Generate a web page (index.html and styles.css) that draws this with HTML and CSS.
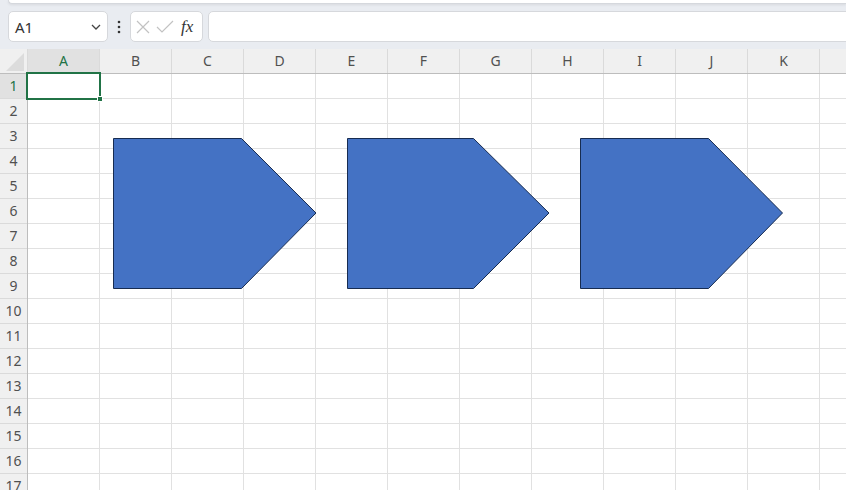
FILE: index.html
```html
<!DOCTYPE html>
<html lang="en">
<head>
  <meta charset="UTF-8" />
  <title>Book1 - Excel</title>
  <link rel="stylesheet" href="styles.css">
</head>
<body>
  <div class="app">
    <div class="ribbon-edge"></div>

    <div class="formula-bar">
      <div class="name-box">
        <span>A1</span>
        <svg class="chevron" width="10" height="6" viewBox="0 0 10 6"><path d="M1 1 L5 5 L9 1" fill="none" stroke="#444" stroke-width="1.3"/></svg>
      </div>
      <div class="more">
        <svg width="4" height="14" viewBox="0 0 4 14"><circle cx="2" cy="2" r="1.3" fill="#333"/><circle cx="2" cy="7" r="1.3" fill="#333"/><circle cx="2" cy="12" r="1.3" fill="#333"/></svg>
      </div>
      <div class="fx-box">
        <svg width="14" height="14" viewBox="0 0 14 14"><path d="M1 1 L13 13 M13 1 L1 13" stroke="#c2c2c2" stroke-width="1.2"/></svg>
        <svg width="18" height="14" viewBox="0 0 18 14"><path d="M1 7 L6 12 L17 1" fill="none" stroke="#c2c2c2" stroke-width="1.2"/></svg>
        <span class="fx">fx</span>
      </div>
      <div class="formula-input"></div>
    </div>

    <div class="sheet">
      <div class="col-headers">
        <div class="corner">
          <svg width="20" height="20" viewBox="0 0 20 20"><polygon points="20,2 20,20 2,20" fill="#dcdcdc"/></svg>
        </div>
        <div class="col-head active">A</div>
        <div class="col-head">B</div>
        <div class="col-head">C</div>
        <div class="col-head">D</div>
        <div class="col-head">E</div>
        <div class="col-head">F</div>
        <div class="col-head">G</div>
        <div class="col-head">H</div>
        <div class="col-head">I</div>
        <div class="col-head">J</div>
        <div class="col-head">K</div>
        <div class="col-head">L</div>
      </div>
      <div class="body">
        <div class="row-headers">
          <div class="row-head active">1</div>
          <div class="row-head">2</div>
          <div class="row-head">3</div>
          <div class="row-head">4</div>
          <div class="row-head">5</div>
          <div class="row-head">6</div>
          <div class="row-head">7</div>
          <div class="row-head">8</div>
          <div class="row-head">9</div>
          <div class="row-head">10</div>
          <div class="row-head">11</div>
          <div class="row-head">12</div>
          <div class="row-head">13</div>
          <div class="row-head">14</div>
          <div class="row-head">15</div>
          <div class="row-head">16</div>
          <div class="row-head">17</div>
        </div>
        <div class="cells"></div>
      </div>
    </div>

    <!-- floating shapes -->
    <svg class="shapes" width="846" height="490" viewBox="0 0 846 490">
      <polygon points="113.5,138.5 241.5,138.5 316,213 241.5,288.5 113.5,288.5" />
      <polygon points="347.5,138.5 473.5,138.5 549,213 473.5,288.5 347.5,288.5" />
      <polygon points="580.5,138.5 708.5,138.5 782.5,213 708.5,288.5 580.5,288.5" />
    </svg>

    <div class="selection"></div>
    <div class="fill-handle"></div>
  </div>
</body>
</html>
```

FILE: styles.css
```css
* {
  margin: 0;
  padding: 0;
  box-sizing: border-box;
}

body {
  background: #fff;
  font-family: 'Noto Sans', 'Open Sans', sans-serif;
  color: #444;
  overflow: hidden;
}

.app {
  position: relative;
  width: 846px;
  height: 490px;
  overflow: hidden;
  background: #e9ecf1;
}

.ribbon-edge {
  height: 4px;
  margin-left: 8px;
  background: #fff;
  border-bottom: 1px solid #d5d8dd;
  border-left: 1px solid #d5d8dd;
  border-bottom-left-radius: 5px;
  box-shadow: 0 1px 3px rgba(0, 0, 0, 0.08);
}

/* formula bar */
.formula-bar {
  display: flex;
  align-items: center;
  height: 31px;
  margin-top: 7px;
  margin-right: -20px;
  padding-left: 8px;
}

.name-box {
  width: 100px;
  height: 31px;
  background: #fff;
  border: 1px solid #d6d8dc;
  border-radius: 5px;
  display: flex;
  align-items: center;
  justify-content: space-between;
  padding: 0 6px 0 6px;
  font-size: 15px;
  color: #333;
}

.more {
  width: 22px;
  display: flex;
  justify-content: center;
}

.fx-box {
  width: 73px;
  height: 31px;
  background: #fff;
  border: 1px solid #d6d8dc;
  border-radius: 5px;
  display: flex;
  align-items: center;
  gap: 6px;
  padding-left: 5px;
}

.fx {
  font-family: 'Liberation Serif', serif;
  font-style: italic;
  font-size: 17px;
  color: #333;
  margin-left: 1px;
}

.formula-input {
  flex: 1;
  height: 31px;
  margin-left: 5px;
  background: #fff;
  border: 1px solid #d6d8dc;
  border-radius: 5px;
}

/* sheet */
.sheet {
  margin-top: 7px;
  background: #fff;
}

.col-headers {
  display: flex;
  height: 25px;
  background: #f0f0f0;
  border-bottom: 1px solid #bdbdbd;
}

.corner {
  width: 28px;
  flex-shrink: 0;
  border-right: 1px solid #dadada;
  display: flex;
  align-items: flex-end;
  justify-content: flex-end;
  padding: 0 3px 2px 0;
}

.col-head {
  width: 72px;
  flex-shrink: 0;
  border-right: 1px solid #dadada;
  text-align: center;
  font-size: 14px;
  line-height: 24px;
  color: #505050;
}

.col-head.active,
.row-head.active {
  background: #e1e1e1;
  color: #217346;
}

.body {
  display: flex;
}

.row-headers {
  width: 28px;
  flex-shrink: 0;
  background: #f0f0f0;
  border-right: 1px solid #bdbdbd;
}

.row-head {
  height: 25px;
  border-bottom: 1px solid #dadada;
  text-align: center;
  font-size: 14px;
  line-height: 24px;
  color: #505050;
}

.cells {
  flex: 1;
  height: 425px;
  background-color: #fff;
  background-image:
    linear-gradient(to right, transparent 71px, #e1e1e1 71px),
    linear-gradient(to bottom, transparent 24px, #e1e1e1 24px);
  background-size: 72px 100%, 100% 25px;
}

/* overlays */
.shapes {
  position: absolute;
  left: 0;
  top: 0;
  pointer-events: none;
}

.shapes polygon {
  fill: #4472c4;
  stroke: #172c51;
  stroke-width: 1;
}

.selection {
  position: absolute;
  left: 26px;
  top: 72px;
  width: 75px;
  height: 28px;
  border: 2px solid #217346;
}

.fill-handle {
  position: absolute;
  left: 97px;
  top: 96px;
  width: 6px;
  height: 6px;
  background: #217346;
  border: 1px solid #fff;
}
```
